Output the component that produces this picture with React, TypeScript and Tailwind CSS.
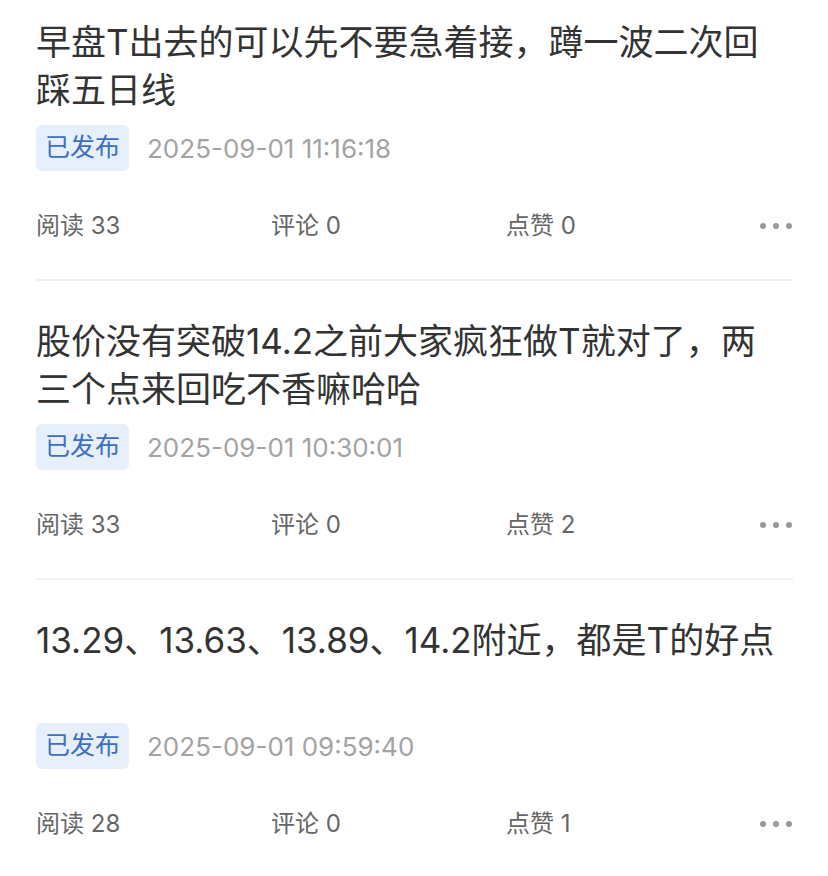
const posts = [
  {
    title: "早盘T出去的可以先不要急着接，蹲一波二次回踩五日线",
    time: "2025-09-01 11:16:18",
    reads: 33,
    comments: 0,
    likes: 0,
  },
  {
    title: "股价没有突破14.2之前大家疯狂做T就对了，两三个点来回吃不香嘛哈哈",
    time: "2025-09-01 10:30:01",
    reads: 33,
    comments: 0,
    likes: 2,
  },
  {
    title: "13.29、13.63、13.89、14.2附近，都是T的好点",
    time: "2025-09-01 09:59:40",
    reads: 28,
    comments: 0,
    likes: 1,
  },
];

export default function App() {
  return (
    <div
      className="min-h-screen bg-white pr-[35px] pl-[36px]"
      style={{ fontFamily: 'Inter, "Noto Sans CJK SC", "Noto Sans", sans-serif' }}
    >
      {posts.map((post, index) => (
        <div
          key={index}
          className={
            index === 0
              ? "pt-[18px] border-b-2 border-[#efefef] pb-[36px]"
              : index === posts.length - 1
                ? "pt-[36px] pb-[36px]"
                : "pt-[36px] border-b-2 border-[#efefef] pb-[36px]"
          }
        >
          {/* Title */}
          <h2 className="h-[96px] pr-[14px] text-[35px] leading-[48px] text-[#333333] overflow-hidden">
            {post.title}
          </h2>

          {/* Status + time */}
          <div className="mt-[11px] flex items-center gap-[18px]">
            <span className="h-[46px] px-[9px] flex items-center rounded-[6px] bg-[#e7effa] text-[#3d6fbf] text-[25px]">
              已发布
            </span>
            <span className="text-[26px] text-[#a3a3a3]">{post.time}</span>
          </div>

          {/* Stats */}
          <div className="mt-[38px] h-[34px] flex items-center text-[24px] text-[#666666]">
            <span className="w-[235px]">阅读 {post.reads}</span>
            <span className="w-[235px]">评论 {post.comments}</span>
            <span className="flex-1">点赞 {post.likes}</span>
            <span className="flex items-center gap-[7px] pr-[1px]">
              <span className="w-[6px] h-[6px] rounded-full bg-[#999999]" />
              <span className="w-[6px] h-[6px] rounded-full bg-[#999999]" />
              <span className="w-[6px] h-[6px] rounded-full bg-[#999999]" />
            </span>
          </div>
        </div>
      ))}
    </div>
  );
}
